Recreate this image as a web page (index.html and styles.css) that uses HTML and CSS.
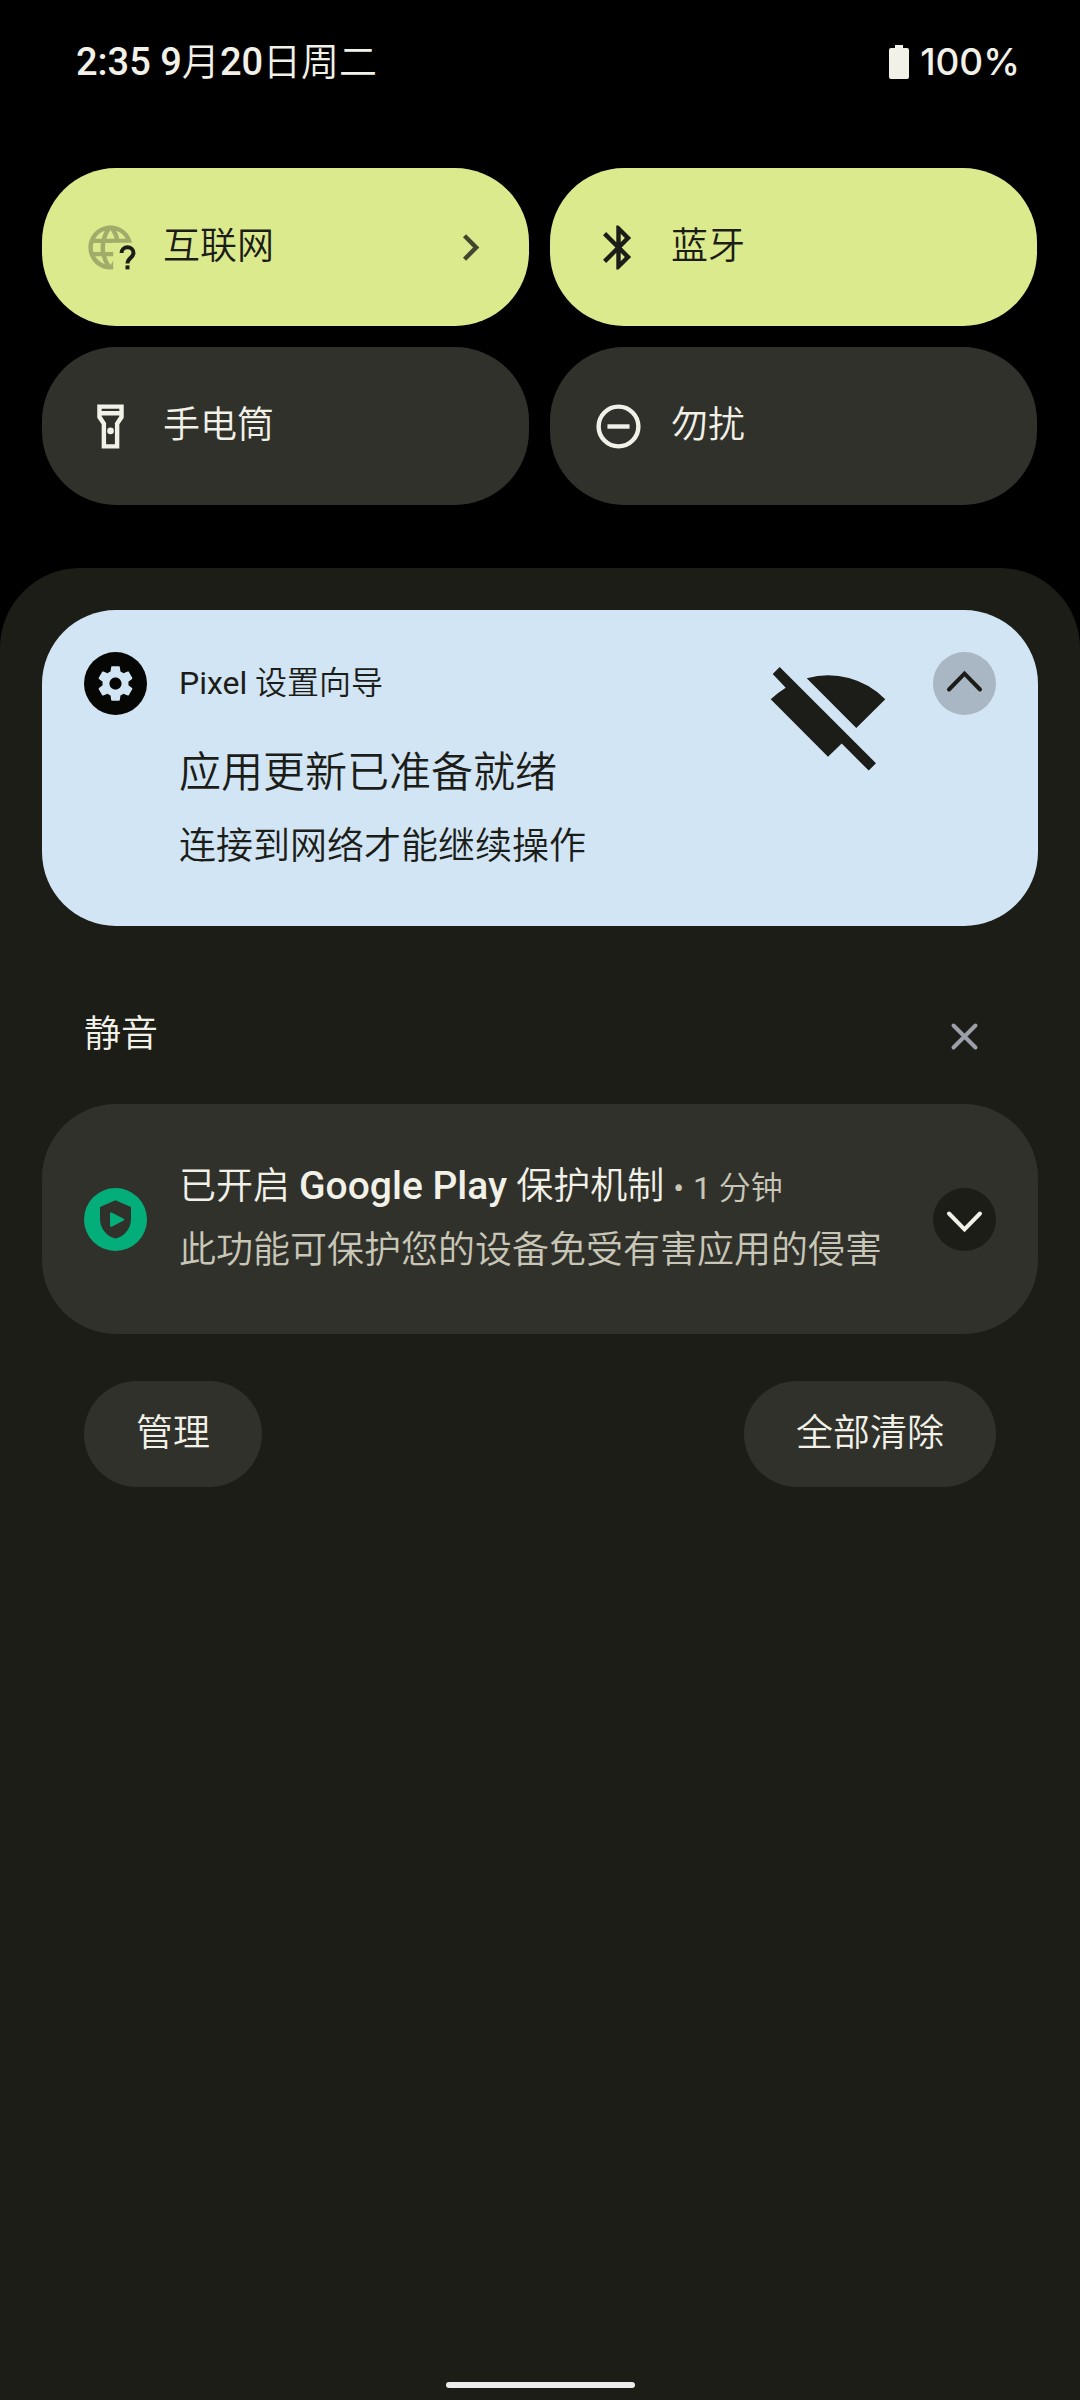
FILE: index.html
```html
<!DOCTYPE html>
<html lang="zh-CN">
<head>
<meta charset="utf-8">
<meta name="viewport" content="width=device-width, initial-scale=1">
<title>通知栏</title>
<link rel="stylesheet" href="styles.css">
</head>
<body>
<header class="status-bar">
  <p class="clock"><span class="medium">2:35 9</span>月<span class="medium">20</span>日周二</p>
  <p class="battery">
    <svg class="battery-icon" viewBox="0 0 20 34" aria-hidden="true"><path d="M6 0h8v3h4a2 2 0 0 1 2 2v27a2 2 0 0 1-2 2H2a2 2 0 0 1-2-2V5a2 2 0 0 1 2-2h4z"/></svg>
    <span>100%</span>
  </p>
</header>

<section class="tiles" aria-label="快捷设置">
  <button class="tile tile-on" type="button">
    <svg class="tile-icon" viewBox="0 0 24 24" aria-hidden="true">
      <defs><clipPath id="globe-cut"><path d="M0 0h24v9.800H13.200V24H0z"/></clipPath></defs>
      <path opacity=".3" clip-path="url(#globe-cut)" d="M11.990 2C6.470 2 2 6.480 2 12s4.470 10 9.990 10C17.520 22 22 17.520 22 12S17.520 2 11.990 2zm6.930 6h-2.950c-.32-1.250-.78-2.450-1.380-3.560 1.840.63 3.370 1.910 4.330 3.560zM12 4.040c.83 1.200 1.480 2.530 1.910 3.960h-3.820c.43-1.430 1.080-2.760 1.910-3.960zM4.260 14C4.100 13.360 4 12.690 4 12s.1-1.360.26-2h3.380c-.08.66-.14 1.320-.14 2s.06 1.340.14 2H4.260zm.82 2h2.950c.32 1.250.78 2.450 1.380 3.560-1.840-.63-3.370-1.900-4.330-3.560zm2.950-8H5.080c.96-1.660 2.490-2.930 4.330-3.560C8.810 5.550 8.350 6.750 8.030 8zM12 19.960c-.83-1.200-1.480-2.530-1.910-3.960h3.820c-.43 1.430-1.080 2.760-1.910 3.960zM14.340 14H9.660c-.09-.66-.16-1.320-.16-2s.07-1.350.16-2h4.680c.09.65.16 1.320.16 2s-.07 1.340-.16 2z"/>
      <path d="M17 14.500a2.700 2.600 0 0 1 5.400 0c0 2.100-2.700 2.300-2.700 4.800" fill="none" stroke="currentColor" stroke-width="1.800"/>
      <path d="M18.800 20.100h1.800v1.800h-1.800z"/>
    </svg>
    <span class="tile-label">互联网</span>
    <svg class="tile-more" viewBox="0 0 24 24" aria-hidden="true"><path d="M10 6L8.590 7.410 13.170 12l-4.580 4.590L10 18l6-6z"/></svg>
  </button>
  <button class="tile tile-on" type="button">
    <svg class="tile-icon" viewBox="0 0 24 24" aria-hidden="true"><path d="M17.710 7.710L12 2h-1v7.590L6.410 5 5 6.410 10.590 12 5 17.590 6.410 19 11 14.410V22h1l5.710-5.710-4.300-4.290 4.300-4.290zM13 5.830l1.880 1.880L13 9.590V5.830zm1.880 10.460L13 18.170v-3.760l1.880 1.880z"/></svg>
    <span class="tile-label">蓝牙</span>
  </button>
  <button class="tile" type="button">
    <svg class="tile-icon" viewBox="0 0 24 24" aria-hidden="true"><path fill-rule="evenodd" d="M18 2H6v6l2 3v11h8V11l2-3zM16 4v1H8V4zM14 10.400V20h-4v-9.600L8 7.400V7h8v.4z"/><circle cx="12" cy="14" r="1.500"/></svg>
    <span class="tile-label">手电筒</span>
  </button>
  <button class="tile" type="button">
    <svg class="tile-icon" viewBox="0 0 24 24" aria-hidden="true"><circle cx="12" cy="12" r="9" fill="none" stroke="currentColor" stroke-width="2"/><path d="M7 11h10v2H7z"/></svg>
    <span class="tile-label">勿扰</span>
  </button>
</section>

<main class="shade">
  <article class="card card-setup">
    <svg class="badge badge-gear" viewBox="0 0 63 63" aria-hidden="true">
      <circle cx="31.500" cy="31.500" r="31.500"/>
      <path class="gear" transform="translate(10.700 10.700) scale(1.733)" d="M19.430 12.980c.04-.32.07-.64.07-.98s-.03-.66-.07-.98l2.110-1.650c.19-.15.24-.42.12-.64l-2-3.460c-.12-.22-.39-.3-.61-.22l-2.490 1c-.52-.4-1.080-.73-1.690-.98l-.38-2.650C14.460 2.180 14.250 2 14 2h-4c-.25 0-.46.18-.49.42l-.38 2.650c-.61.25-1.170.59-1.690.98l-2.490-1c-.23-.09-.49 0-.61.22l-2 3.460c-.13.22-.07.49.12.64l2.110 1.650c-.04.32-.07.65-.07.98s.03.66.07.98l-2.110 1.650c-.19.15-.24.42-.12.64l2 3.460c.12.22.39.3.61.22l2.490-1c.52.4 1.080.73 1.690.98l.38 2.650c.03.24.24.42.49.42h4c.25 0 .46-.18.49-.42l.38-2.650c.61-.25 1.170-.59 1.690-.98l2.490 1c.23.09.49 0 .61-.22l2-3.460c.12-.22.07-.49-.12-.64l-2.110-1.650zM12 15.500c-1.930 0-3.500-1.570-3.500-3.500s1.570-3.500 3.500-3.500 3.500 1.570 3.500 3.500-1.570 3.500-3.500 3.500z"/>
    </svg>
    <div class="card-text">
      <p class="app-name"><span class="regular">Pixel</span> 设置向导</p>
      <h2 class="card-title">应用更新已准备就绪</h2>
      <p class="card-body">连接到网络才能继续操作</p>
    </div>
    <svg class="wifi-off" viewBox="0 0 126 126" aria-hidden="true"><path d="M14.700 15L111 111.300l-7.300 7.300-27-27L63 104.700 5.700 47.300Q12.500 40.800 20.700 35.700L7.700 22zM41.700 26.300A79.700 79.700 0 0 1 120.300 47.300L91.300 76z"/></svg>
    <button class="round-button collapse" type="button" aria-label="收起"><svg viewBox="0 0 63 63" aria-hidden="true"><path d="M16 37.500L31.500 21.500 47 37.500"/></svg></button>
  </article>

  <div class="section-head">
    <h2 class="section-title">静音</h2>
    <button class="round-button dismiss" type="button" aria-label="清除静音通知"><svg viewBox="0 0 63 63" aria-hidden="true"><path d="M20.500 20.500l22 22M42.500 20.500l-22 22"/></svg></button>
  </div>

  <article class="card card-silent">
    <svg class="badge" viewBox="0 0 63 63" aria-hidden="true">
      <circle class="green" cx="31.500" cy="31.500" r="31.500"/>
      <path class="shield" d="M31.500 12.300L47 19v12c0 9.500-6.500 17.500-15.500 19.500C22.500 48.500 16 40.500 16 31V19z"/>
      <path class="green" d="M26 25.500c0-1 .8-1.300 1.600-.9L39.700 30.700c.8.400.8 1.400 0 1.800L27.600 38.700c-.8.400-1.600 0-1.600-.9z"/>
    </svg>
    <div class="card-text">
      <div class="headline">
        <h3 class="silent-title">已开启 <span class="brand medium">Google Play</span> 保护机制</h3>
        <span class="meta regular">•</span>
        <span class="meta"><span class="regular">1</span> 分钟</span>
      </div>
      <p class="silent-body">此功能可保护您的设备免受有害应用的侵害</p>
    </div>
    <button class="round-button expand" type="button" aria-label="展开"><svg viewBox="0 0 63 63" aria-hidden="true"><path d="M16 25.500L31.500 41.500 47 25.500"/></svg></button>
  </article>

  <div class="actions">
    <button class="action" type="button">管理</button>
    <button class="action" type="button">全部清除</button>
  </div>

  <div class="home-bar"></div>
</main>
</body>
</html>
```

FILE: styles.css
```css
:root {
  --lime: #dcea8e;
  --surface: #31312c;
  --shade: #1d1d18;
  --sky: #d2e5f4;
  --ink: #1c1d18;
  --light: #f2f1e8;
  --muted: #c8c7b7;
  --green: #04ae7b;
}

* {
  box-sizing: border-box;
  margin: 0;
}

body {
  display: flex;
  flex-direction: column;
  min-height: 100vh;
  background: #000;
  color: var(--light);
  font: 350 37px/48px Roboto, "Noto Sans CJK SC", sans-serif;
}

button {
  border: 0;
  padding: 0;
  color: inherit;
  font: inherit;
}

svg {
  display: block;
  flex: none;
  fill: currentColor;
}

h2,
h3 {
  font-size: inherit;
  font-weight: inherit;
}

.regular {
  font-weight: 400;
}

.medium {
  font-weight: 500;
}

.status-bar {
  display: flex;
  justify-content: space-between;
  padding: 38px 60px 82px 76px;
}

.clock {
  font-size: 38px;
}

.battery {
  display: flex;
  align-items: center;
  gap: 11px;
  font-family: Inter, sans-serif;
  font-weight: 500;
}

.battery-icon {
  width: 20px;
  height: 34px;
}

.tiles {
  display: grid;
  grid-template-columns: 1fr 1fr;
  gap: 21px;
  padding: 0 43px 63px 42px;
}

.tile {
  display: flex;
  align-items: center;
  gap: 26px;
  padding: 52px 32px 52px 42px;
  border-radius: 74px;
  background: var(--surface);
  line-height: 54px;
}

.tile-on {
  background: var(--lime);
  color: var(--ink);
}

.tile-icon,
.tile-more {
  width: 53px;
  height: 53px;
}

.tile-label {
  flex: 1;
  text-align: left;
}

.tile-more {
  opacity: .8;
}

.shade {
  flex: 1;
  display: flex;
  flex-direction: column;
  padding: 42px 42px 12px;
  border-radius: 80px 80px 0 0;
  background: var(--shade);
}

.card {
  display: flex;
  padding: 42px;
  border-radius: 74px;
}

.card-setup {
  padding-bottom: 53px;
  background: var(--sky);
  color: var(--ink);
}

.badge,
.round-button,
.round-button svg {
  flex: none;
  width: 63px;
  height: 63px;
}

.badge-gear {
  color: #060604;
}

.gear {
  fill: var(--sky);
}

.green {
  fill: var(--green);
}

.shield {
  fill: var(--surface);
}

.card-text {
  flex: 1;
  min-width: 0;
  margin-left: 32px;
}

.app-name {
  font-size: 32px;
  line-height: 63px;
}

.card-title {
  margin-top: 26px;
  font-size: 42px;
  line-height: 64px;
}

.card-body {
  margin-top: 16px;
  line-height: 52px;
}

.wifi-off {
  width: 126px;
  height: 126px;
  margin-right: 42px;
}

.round-button {
  border-radius: 50%;
  background: none;
}

.round-button path {
  fill: none;
  stroke: currentColor;
  stroke-width: 4;
  stroke-linecap: round;
}

.collapse {
  background: #a9b6c3;
}

.expand {
  background: var(--shade);
}

.dismiss {
  color: #9a9fa8;
}

.section-head {
  display: flex;
  align-items: center;
  justify-content: space-between;
  margin: 79px 42px 36px;
}

.section-title {
  padding-bottom: 3px;
}

.card-silent {
  align-items: center;
  padding: 51px 42px;
  background: var(--surface);
}

.headline {
  display: flex;
  align-items: baseline;
  gap: 9px;
  line-height: 64px;
}

.brand {
  font-size: 39px;
  line-height: 48px;
}

.meta {
  color: var(--muted);
  font-size: 32px;
  line-height: 48px;
}

.silent-body {
  color: var(--muted);
  line-height: 64px;
}

.actions {
  display: flex;
  justify-content: space-between;
  margin: 47px 42px 0;
}

.action {
  padding: 26px 52px;
  border-radius: 53px;
  background: var(--surface);
  line-height: 54px;
}

.home-bar {
  align-self: center;
  width: 189px;
  height: 6px;
  margin-top: auto;
  border-radius: 3px;
  background: #ececec;
}
```
